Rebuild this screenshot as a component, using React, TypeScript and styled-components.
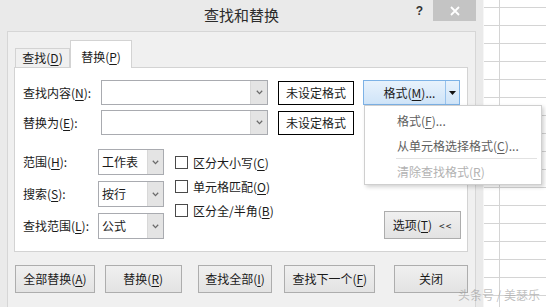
import styled, { createGlobalStyle } from "styled-components";

const GlobalStyle = createGlobalStyle`
  html, body {
    margin: 0;
    padding: 0;
  }
  body {
    background: #fff;
    font-family: "Noto Sans CJK SC", "Noto Sans", sans-serif;
    font-size: 12px;
    line-height: 16px;
    color: #1a1a1a;
  }
  * {
    box-sizing: border-box;
  }
  u {
    text-underline-offset: 2px;
  }
`;

const Chevron = () => (
  <svg width="7" height="5" viewBox="0 0 7 5">
    <polyline points="0.8,0.8 3.5,3.6 6.2,0.8" fill="none" stroke="#6b6b6b" strokeWidth="1.3" />
  </svg>
);

function Select({ value, width, drop }: { value?: string; width: number; drop: number }) {
  return (
    <Combo $w={width}>
      <ComboText>{value}</ComboText>
      <DropPart $w={drop}>
        <Chevron />
      </DropPart>
    </Combo>
  );
}

export default function App() {
  return (
    <>
      <GlobalStyle />
      <Screen>
        <Dialog>
          <TitleBar>
            <span />
            <Title>查找和替换</Title>
            <Controls>
              <Help>?</Help>
              <CloseBox>
                <svg width="10" height="10" viewBox="0 0 10 10">
                  <path d="M1 1 L9 9 M9 1 L1 9" stroke="#fff" strokeWidth="1.8" />
                </svg>
              </CloseBox>
            </Controls>
          </TitleBar>

          <Client>
            <Tabs>
              <Tab $w={55}>查找(<u>D</u>)</Tab>
              <Tab $w={62} $active>替换(<u>P</u>)</Tab>
            </Tabs>

            <Panel>
              <FindRow>
                <FieldLabel $w={78}>查找内容(<u>N</u>):</FieldLabel>
                <Select width={167} drop={18} />
                <FormatBox>未设定格式</FormatBox>
                <SplitButton>
                  <SplitMain>
                    <span>格式(<u>M</u>)...</span>
                  </SplitMain>
                  <SplitArrow>
                    <svg width="7" height="4" viewBox="0 0 7 4">
                      <path d="M0 0 H7 L3.5 4 Z" fill="#111" />
                    </svg>
                  </SplitArrow>
                  <Menu>
                    <MenuItem>格式(<u>F</u>)...</MenuItem>
                    <MenuItem>从单元格选择格式(<u>C</u>)...</MenuItem>
                    <MenuSep />
                    <MenuItem $disabled>清除查找格式(<u>R</u>)</MenuItem>
                  </Menu>
                </SplitButton>
              </FindRow>

              <FindRow $gap={5}>
                <FieldLabel $w={78}>替换为(<u>E</u>):</FieldLabel>
                <Select width={167} drop={18} />
                <FormatBox>未设定格式</FormatBox>
              </FindRow>

              <Options>
                <Fields>
                  <FieldLabel>范围(<u>H</u>):</FieldLabel>
                  <Select value="工作表" width={66} drop={17} />
                  <FieldLabel>搜索(<u>S</u>):</FieldLabel>
                  <Select value="按行" width={66} drop={17} />
                  <FieldLabel>查找范围(<u>L</u>):</FieldLabel>
                  <Select value="公式" width={66} drop={17} />
                </Fields>

                <Checks>
                  <CheckRow>
                    <Box />
                    <span>区分大小写(<u>C</u>)</span>
                  </CheckRow>
                  <CheckRow>
                    <Box />
                    <span>单元格匹配(<u>O</u>)</span>
                  </CheckRow>
                  <CheckRow>
                    <Box />
                    <span>区分全/半角(<u>B</u>)</span>
                  </CheckRow>
                </Checks>

                <OptionsButton>
                  <span>
                    选项(<u>T</u>)<Chevrons>&lt;&lt;</Chevrons>
                  </span>
                </OptionsButton>
              </Options>
            </Panel>

            <ButtonRow>
              <ActionButton $w={80} $ml={0}><span>全部替换(<u>A</u>)</span></ActionButton>
              <ActionButton $w={77} $ml={10}><span>替换(<u>R</u>)</span></ActionButton>
              <ActionButton $w={75} $ml={16}><span>查找全部(<u>I</u>)</span></ActionButton>
              <ActionButton $w={91} $ml={12}><span>查找下一个(<u>F</u>)</span></ActionButton>
              <ActionButton $w={74} $ml={19}><span>关闭</span></ActionButton>
            </ButtonRow>
          </Client>
        </Dialog>

        <Sheet />
        <Watermark>头条号 / 美瑟乐</Watermark>
      </Screen>
    </>
  );
}

const Screen = styled.div`
  position: relative;
  display: flex;
  width: 546px;
  height: 307px;
  overflow: hidden;
`;

const Dialog = styled.div`
  flex: none;
  width: 483px;
  height: 307px;
  padding: 0 7px;
  background: #eaeaea;
  display: flex;
  flex-direction: column;
`;

const TitleBar = styled.div`
  height: 31px;
  display: grid;
  grid-template-columns: 1fr auto 1fr;
`;

const Title = styled.div`
  font-size: 15px;
  line-height: 30px;
  color: #2b2b2b;
`;

const Controls = styled.div`
  display: flex;
  justify-content: flex-end;
  align-items: flex-start;
`;

const Help = styled.div`
  margin: 4px 10px 0 0;
  font-family: "Liberation Sans", sans-serif;
  font-weight: bold;
  font-size: 12px;
  line-height: 14px;
  color: #333;
`;

const CloseBox = styled.div`
  width: 43px;
  height: 21px;
  background: #c4c4c4;
  display: flex;
  align-items: center;
  justify-content: center;
`;

const Client = styled.div`
  flex: 1;
  background: #f0f0f0;
  border: 1px solid #d6d6d6;
  border-bottom: none;
  padding: 8px 7px 0 6px;
`;

const Tabs = styled.div`
  display: flex;
  align-items: flex-end;
  height: 28px;
  margin-bottom: -1px;
  padding-left: 1px;
`;

const Tab = styled.div<{ $w: number; $active?: boolean }>`
  position: relative;
  z-index: ${(p) => (p.$active ? 1 : 0)};
  width: ${(p) => p.$w}px;
  height: ${(p) => (p.$active ? 28 : 19)}px;
  margin-bottom: ${(p) => (p.$active ? 0 : 1)}px;
  padding-bottom: ${(p) => (p.$active ? 3 : 1)}px;
  text-align: center;
  display: flex;
  align-items: flex-end;
  justify-content: center;
  background: ${(p) => (p.$active ? "#fff" : "#f0f0f0")};
  border: 1px solid #d3d3d3;
  border-bottom: none;
  color: #1a1a1a;
  white-space: pre;
`;

const Panel = styled.div`
  background: #fff;
  border: 1px solid #d3d3d3;
  padding: 12px 6px 12px 8px;
`;

const FindRow = styled.div<{ $gap?: number }>`
  display: flex;
  align-items: center;
  height: 25px;
  margin-top: ${(p) => p.$gap ?? 0}px;
`;

const FieldLabel = styled.div<{ $w?: number }>`
  ${(p) => (p.$w ? `width: ${p.$w}px;` : "")}
  flex: none;
  white-space: nowrap;
  align-self: center;
`;

const Combo = styled.div<{ $w: number }>`
  width: ${(p) => p.$w}px;
  height: 100%;
  flex: none;
  display: flex;
  background: #fff;
  border: 1px solid #a9abb0;
`;

const ComboText = styled.div`
  flex: 1;
  padding-left: 3px;
  display: flex;
  align-items: center;
`;

const DropPart = styled.div<{ $w: number }>`
  width: ${(p) => p.$w - 1}px;
  background: #e4e4e4;
  border-left: 1px solid #d8d8d8;
  display: flex;
  align-items: center;
  justify-content: center;
`;

const FormatBox = styled.div`
  margin-left: 10px;
  width: 76px;
  height: 24px;
  border: 1px solid #000;
  background: #fff;
  display: flex;
  align-items: center;
  justify-content: center;
`;

const SplitButton = styled.div`
  position: relative;
  margin-left: 9px;
  width: 97px;
  height: 25px;
  display: flex;
  border: 1px solid #7db2e6;
  background: linear-gradient(#e8f2fc, #cfe4f8);
`;

const SplitMain = styled.div`
  flex: 1;
  display: flex;
  align-items: center;
  justify-content: center;
  padding-left: 10px;
`;

const SplitArrow = styled.div`
  width: 14px;
  border-left: 1px solid #98c2ec;
  display: flex;
  align-items: center;
  justify-content: center;
`;

const Menu = styled.div`
  position: absolute;
  z-index: 10;
  top: calc(100% + 1px);
  left: 0;
  width: 178px;
  padding: 2px 0 0;
  background: #fff;
  border: 1px solid #cfcfcf;
  box-shadow: 2px 2px 4px rgba(0, 0, 0, 0.18);
`;

const MenuItem = styled.div<{ $disabled?: boolean }>`
  height: 25px;
  line-height: 25px;
  padding-left: 32px;
  white-space: nowrap;
  color: ${(p) => (p.$disabled ? "#b2b2b2" : "#5e5e5e")};
`;

const MenuSep = styled.div`
  height: 1px;
  margin: 0 4px 0 31px;
  background: #e2e2e2;
`;

const Options = styled.div`
  display: flex;
  align-items: flex-start;
  margin-top: 14px;
`;

const Fields = styled.div`
  display: grid;
  grid-template-columns: 75px 66px;
  grid-auto-rows: 26px;
  row-gap: 6px;
`;

const Checks = styled.div`
  display: flex;
  flex-direction: column;
  gap: 11px;
  margin-left: 11px;
  padding-top: 7px;
`;

const CheckRow = styled.div`
  display: flex;
  align-items: center;
  gap: 5px;
  height: 13px;
  white-space: nowrap;
`;

const Box = styled.span`
  flex: none;
  width: 13px;
  height: 13px;
  border: 1px solid #4a4a4a;
  background: #fff;
`;

const buttonLook = `
  display: flex;
  align-items: center;
  justify-content: center;
  height: 28px;
  background: linear-gradient(#f0f0f0, #e3e3e3);
  border: 1px solid #adadad;
  white-space: nowrap;
`;

const OptionsButton = styled.div`
  ${buttonLook}
  align-self: flex-end;
  margin-left: auto;
  width: 77px;
`;

const Chevrons = styled.span`
  margin-left: 7px;
  font-size: 10px;
  letter-spacing: 1px;
`;

const ButtonRow = styled.div`
  display: flex;
  margin-top: 13px;
  padding-left: 1px;
`;

const ActionButton = styled.div<{ $w: number; $ml: number }>`
  ${buttonLook}
  width: ${(p) => p.$w}px;
  margin-left: ${(p) => p.$ml}px;
`;

const Sheet = styled.div`
  flex: 1;
  background-color: #fff;
  background-image: linear-gradient(
      to right,
      transparent 15px,
      #d4d4d4 15px,
      #d4d4d4 16px,
      transparent 16px
    ),
    repeating-linear-gradient(
      to bottom,
      transparent 0 7px,
      #d4d4d4 7px 8px,
      transparent 8px 18px
    );
  border-left: 1px solid #f6f6f6;
`;

const Watermark = styled.div`
  position: absolute;
  right: 6px;
  bottom: 4px;
  font-size: 12px;
  color: rgba(150, 150, 150, 0.6);
  white-space: nowrap;
`;
